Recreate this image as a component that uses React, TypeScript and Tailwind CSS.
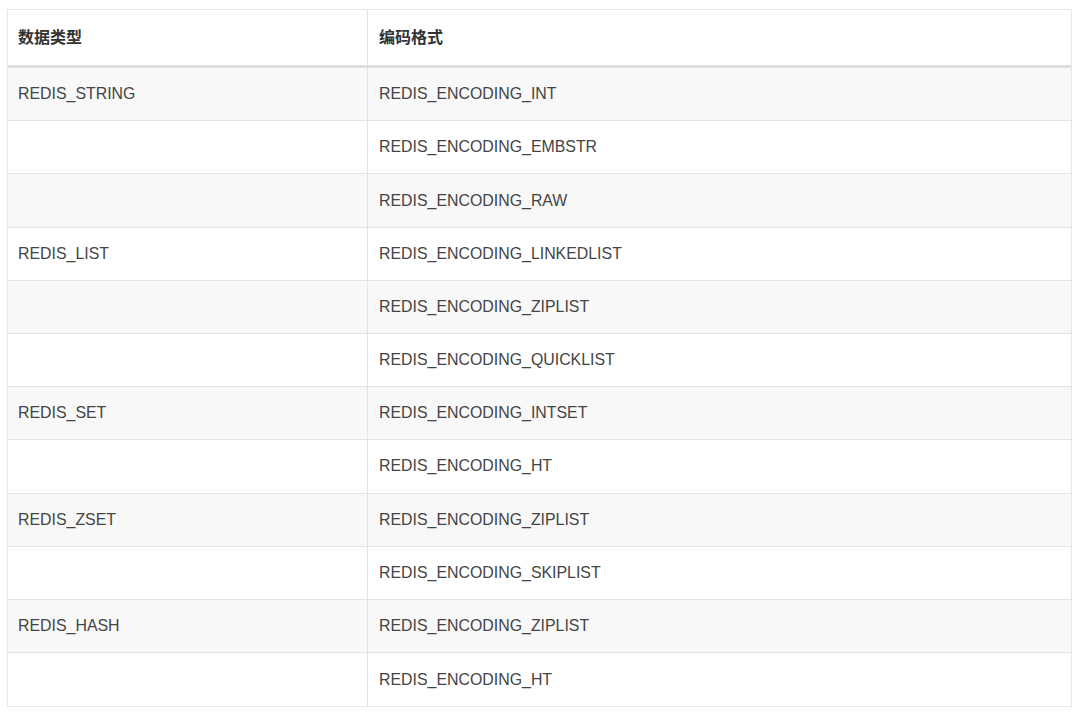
const rows: [string, string][] = [
  ["REDIS_STRING", "REDIS_ENCODING_INT"],
  ["", "REDIS_ENCODING_EMBSTR"],
  ["", "REDIS_ENCODING_RAW"],
  ["REDIS_LIST", "REDIS_ENCODING_LINKEDLIST"],
  ["", "REDIS_ENCODING_ZIPLIST"],
  ["", "REDIS_ENCODING_QUICKLIST"],
  ["REDIS_SET", "REDIS_ENCODING_INTSET"],
  ["", "REDIS_ENCODING_HT"],
  ["REDIS_ZSET", "REDIS_ENCODING_ZIPLIST"],
  ["", "REDIS_ENCODING_SKIPLIST"],
  ["REDIS_HASH", "REDIS_ENCODING_ZIPLIST"],
  ["", "REDIS_ENCODING_HT"],
];

export default function App() {
  return (
    <div className="w-[1080px] h-[716px] bg-white pt-[9px] pl-[7px] font-['Liberation_Sans','Noto_Sans_CJK_SC',sans-serif] text-[#444]">
      <div className="w-[1065px] border border-[#e6e6e6]">
        <div className="grid grid-cols-[360px_1fr] h-[58px] border-b-[3px] border-[#dedede] bg-white text-[#333]">
          <div className="flex items-center px-[10px] border-r border-[#e3e3e3] text-[16px] font-bold">数据类型</div>
          <div className="flex items-center px-[11px] text-[16px] font-bold">编码格式</div>
        </div>
        {rows.map((r, i) => (
          <div
            key={i}
            className={
              "grid grid-cols-[360px_1fr] h-[53.2px] text-[15.9px] " +
              (i % 2 === 0 ? "bg-[#f8f8f8] " : "bg-white ") +
              (i < rows.length - 1 ? "border-b border-[#e3e3e3]" : "")
            }
          >
            <div className="flex items-center px-[10px] border-r border-[#e3e3e3]">{r[0]}</div>
            <div className="flex items-center px-[11px]">{r[1]}</div>
          </div>
        ))}
      </div>
    </div>
  );
}
